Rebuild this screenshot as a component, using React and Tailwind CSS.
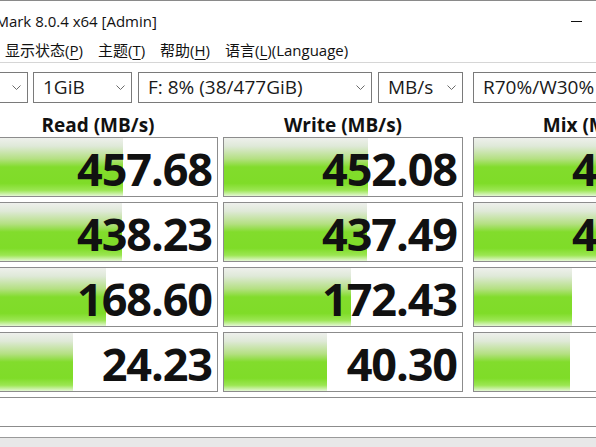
import React from 'react';

const results = [
  { name: 'Read (MB/s)', values: [457.68, 438.23, 168.6, 24.23] },
  { name: 'Write (MB/s)', values: [452.08, 437.49, 172.43, 40.3] },
  { name: 'Mix (MB/s)', values: [447.51, 418.96, 30.72, 27.31] },
];

// log scale meter, same feel as the original app
const meter = (v) => Math.max(0, 39.2 * Math.log10(v) + 39.7);

const Chevron = () => (
  <svg width="9" height="5" viewBox="0 0 9 5" className="shrink-0">
    <polyline points="0.5,0.5 4.5,4.5 8.5,0.5" fill="none" stroke="#6b6b6b" strokeWidth="1" />
  </svg>
);

const Combo = ({ className, label }) => (
  <div className={'flex h-[31px] items-center justify-between border border-[#7a7a7a] bg-white pl-[9px] pr-[6px] text-[19px] text-[#1a1a1a] ' + className}>
    <span className="whitespace-nowrap leading-none">{label}</span>
    <Chevron />
  </div>
);

const MenuItem = ({ label, k }) => (
  <span className="whitespace-nowrap">
    {label}(<span className="underline underline-offset-[3px]">{k}</span>)
  </span>
);

const Cell = ({ value }) => (
  <div className="relative h-[60px] w-[240px] shrink-0 overflow-hidden border border-[#8c8c8c] bg-white">
    <div
      className="h-full bg-[linear-gradient(to_bottom,#eef0ec_0%,#dfe9d8_14%,#b4e082_36%,#82dc2c_50%,#7fdc28_78%,#9be652_90%,#e4f7d4_100%)]"
      style={{ width: meter(value) }}
    />
    <span className="absolute inset-0 flex items-center justify-end pr-[5px] pt-[3px] text-[45px] font-bold tracking-[-1.1px] text-[#111]">
      {value.toFixed(2)}
    </span>
  </div>
);

const App = () => {
  return (
    <div className="h-[447px] w-[596px] overflow-hidden bg-white font-['Open_Sans','Noto_Sans_CJK_SC',sans-serif]">
      <div className="-ml-[22px] flex w-[760px] flex-col">
        {/* title bar */}
        <div className="flex h-[38px] items-center border-t border-[#8a8a8a] pt-[4px]">
          <span className="-ml-[60px] whitespace-nowrap text-[15px] text-[#111]">CrystalDiskMark 8.0.4 x64 [Admin]</span>
          <div className="ml-auto mr-[47px] flex">
            <div className="flex h-[30px] w-[46px] items-center justify-center">
              <div className="h-px w-[11px] bg-[#111]" />
            </div>
            <div className="h-[30px] w-[46px]" />
            <div className="h-[30px] w-[46px]" />
          </div>
        </div>

        {/* menu */}
        <div className="flex h-[25px] items-center gap-[15px] border-b border-[#d6d6d6] pl-[27px] text-[15px] text-[#111]">
          <MenuItem label="显示状态" k="P" />
          <MenuItem label="主题" k="T" />
          <MenuItem label="帮助" k="H" />
          <span className="whitespace-nowrap">
            语言(<span className="underline underline-offset-[3px]">L</span>)(Language)
          </span>
        </div>

        {/* settings */}
        <div className="mt-[9px] flex">
          <Combo className="w-[50px]" label="5" />
          <Combo className="ml-[5px] w-[99px]" label="1GiB" />
          <Combo className="ml-[6px] w-[234px]" label="F: 8% (38/477GiB)" />
          <Combo className="ml-[6px] w-[85px]" label="MB/s" />
          <Combo className="ml-[10px] w-[240px]" label="R70%/W30%" />
        </div>

        {/* column headers */}
        <div className="flex h-[34px] items-center pt-[10px] text-[19px] font-bold text-[#111]">
          <div className="w-[240px] text-center">{results[0].name}</div>
          <div className="ml-[5px] w-[240px] text-center">{results[1].name}</div>
          <div className="ml-[10px] w-[240px] text-center">{results[2].name}</div>
        </div>

        {/* results */}
        <div className="flex flex-col gap-[5px]">
          {[0, 1, 2, 3].map((r) => (
            <div key={r} className="flex">
              <Cell value={results[0].values[r]} />
              <div className="ml-[5px]">
                <Cell value={results[1].values[r]} />
              </div>
              <div className="ml-[10px]">
                <Cell value={results[2].values[r]} />
              </div>
            </div>
          ))}
        </div>

        {/* comment */}
        <div className="mt-[5px] h-[30px] border border-[#8c8c8c] bg-white" />
        <div className="mt-[10px] h-[20px] border-t border-[#9a9a9a] bg-[#e8e8e8]" />
      </div>
    </div>
  );
};

export default App;
